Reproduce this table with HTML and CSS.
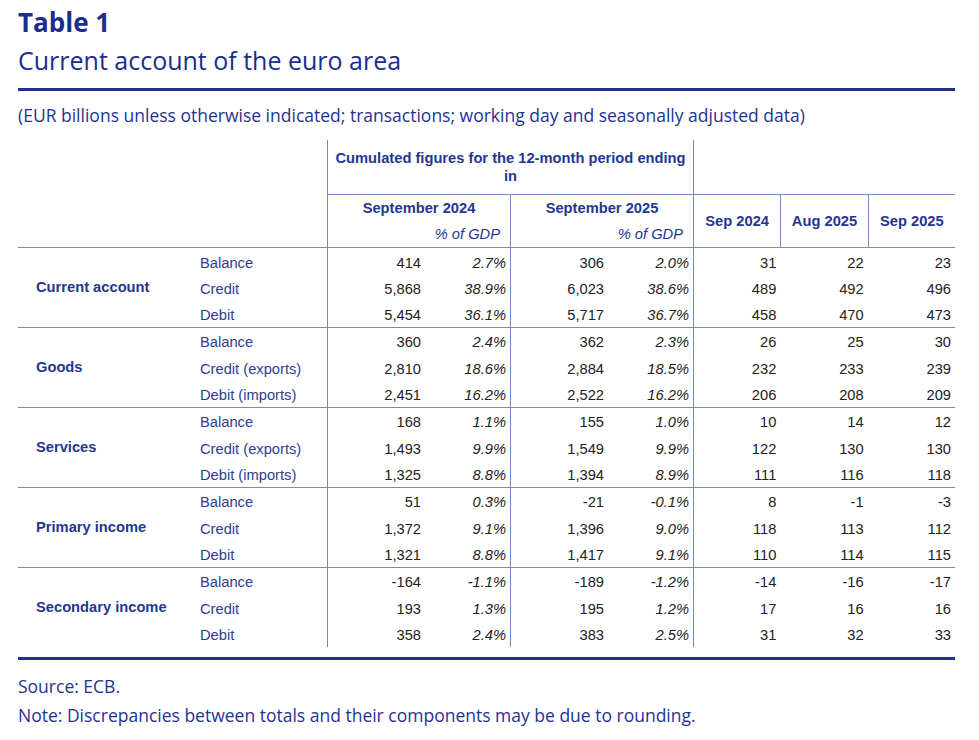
FILE: index.html
```html
<!DOCTYPE html>
<html lang="en">
<head>
<meta charset="utf-8">
<title>Table 1 – Current account of the euro area</title>
<link rel="stylesheet" href="styles.css">
</head>
<body>
<div class="page">
  <header class="heading">
    <h1 class="title">Table 1</h1>
    <h2 class="subtitle">Current account of the euro area</h2>
  </header>
  <p class="unit">(EUR billions unless otherwise indicated; transactions; working day and seasonally adjusted data)</p>

  <table class="data">
    <colgroup>
      <col class="c-group"><col class="c-item">
      <col class="c-val"><col class="c-pct">
      <col class="c-val"><col class="c-pct">
      <col class="c-m"><col class="c-m"><col class="c-m">
    </colgroup>
    <thead>
      <tr class="h1">
        <th colspan="2" class="blank"></th>
        <th colspan="4" class="cum bl bb">Cumulated figures for the 12-month period ending<br>in</th>
        <th colspan="3" class="bl bb"></th>
      </tr>
      <tr class="h2">
        <th colspan="2" rowspan="2" class="blank"></th>
        <th colspan="2" class="bl">September 2024</th>
        <th colspan="2" class="bl">September 2025</th>
        <th rowspan="2" class="bl">Sep 2024</th>
        <th rowspan="2" class="bl">Aug 2025</th>
        <th rowspan="2" class="bl">Sep 2025</th>
      </tr>
      <tr class="h3">
        <th class="bl"></th>
        <th class="gdp">% of GDP</th>
        <th class="bl"></th>
        <th class="gdp">% of GDP</th>
      </tr>
    </thead>

    <tbody>
      <tr class="first"><th rowspan="3" class="grp">Current account</th><td class="item">Balance</td><td class="bl">414</td><td class="pct">2.7%</td><td class="bl">306</td><td class="pct">2.0%</td><td class="bl">31</td><td>22</td><td>23</td></tr>
      <tr><td class="item">Credit</td><td class="bl">5,868</td><td class="pct">38.9%</td><td class="bl">6,023</td><td class="pct">38.6%</td><td class="bl">489</td><td>492</td><td>496</td></tr>
      <tr><td class="item">Debit</td><td class="bl">5,454</td><td class="pct">36.1%</td><td class="bl">5,717</td><td class="pct">36.7%</td><td class="bl">458</td><td>470</td><td>473</td></tr>
    </tbody>
    <tbody>
      <tr class="first"><th rowspan="3" class="grp">Goods</th><td class="item">Balance</td><td class="bl">360</td><td class="pct">2.4%</td><td class="bl">362</td><td class="pct">2.3%</td><td class="bl">26</td><td>25</td><td>30</td></tr>
      <tr><td class="item">Credit (exports)</td><td class="bl">2,810</td><td class="pct">18.6%</td><td class="bl">2,884</td><td class="pct">18.5%</td><td class="bl">232</td><td>233</td><td>239</td></tr>
      <tr><td class="item">Debit (imports)</td><td class="bl">2,451</td><td class="pct">16.2%</td><td class="bl">2,522</td><td class="pct">16.2%</td><td class="bl">206</td><td>208</td><td>209</td></tr>
    </tbody>
    <tbody>
      <tr class="first"><th rowspan="3" class="grp">Services</th><td class="item">Balance</td><td class="bl">168</td><td class="pct">1.1%</td><td class="bl">155</td><td class="pct">1.0%</td><td class="bl">10</td><td>14</td><td>12</td></tr>
      <tr><td class="item">Credit (exports)</td><td class="bl">1,493</td><td class="pct">9.9%</td><td class="bl">1,549</td><td class="pct">9.9%</td><td class="bl">122</td><td>130</td><td>130</td></tr>
      <tr><td class="item">Debit (imports)</td><td class="bl">1,325</td><td class="pct">8.8%</td><td class="bl">1,394</td><td class="pct">8.9%</td><td class="bl">111</td><td>116</td><td>118</td></tr>
    </tbody>
    <tbody>
      <tr class="first"><th rowspan="3" class="grp">Primary income</th><td class="item">Balance</td><td class="bl">51</td><td class="pct">0.3%</td><td class="bl">-21</td><td class="pct">-0.1%</td><td class="bl">8</td><td>-1</td><td>-3</td></tr>
      <tr><td class="item">Credit</td><td class="bl">1,372</td><td class="pct">9.1%</td><td class="bl">1,396</td><td class="pct">9.0%</td><td class="bl">118</td><td>113</td><td>112</td></tr>
      <tr><td class="item">Debit</td><td class="bl">1,321</td><td class="pct">8.8%</td><td class="bl">1,417</td><td class="pct">9.1%</td><td class="bl">110</td><td>114</td><td>115</td></tr>
    </tbody>
    <tbody>
      <tr class="first"><th rowspan="3" class="grp">Secondary income</th><td class="item">Balance</td><td class="bl">-164</td><td class="pct">-1.1%</td><td class="bl">-189</td><td class="pct">-1.2%</td><td class="bl">-14</td><td>-16</td><td>-17</td></tr>
      <tr><td class="item">Credit</td><td class="bl">193</td><td class="pct">1.3%</td><td class="bl">195</td><td class="pct">1.2%</td><td class="bl">17</td><td>16</td><td>16</td></tr>
      <tr><td class="item">Debit</td><td class="bl">358</td><td class="pct">2.4%</td><td class="bl">383</td><td class="pct">2.5%</td><td class="bl">31</td><td>32</td><td>33</td></tr>
    </tbody>
  </table>

  <footer class="notes">
    <p>Source: ECB.</p>
    <p>Note: Discrepancies between totals and their components may be due to rounding.</p>
  </footer>
</div>
</body>
</html>
```

FILE: styles.css
```css
* { box-sizing: border-box; }

html, body {
  margin: 0;
  padding: 0;
  background: #ffffff;
}

.page {
  width: 937px;
  margin-left: 18px;
  padding-top: 3px;
  font-family: "Open Sans", "Liberation Sans", sans-serif;
  color: #1f3391;
}

.heading {
  border-bottom: 3px solid #1e2f8e;
  padding-bottom: 9px;
}

.title,
.subtitle {
  margin: 0;
  color: #1b2d8c;
}

.title {
  font-size: 26px;
  line-height: 39px;
  font-weight: 700;
}

.subtitle {
  font-size: 25px;
  line-height: 37px;
  font-weight: 400;
}

.unit {
  margin: 13px 0 0;
  font-size: 17.5px;
  line-height: 22px;
}

/* ---------- table ---------- */
.data {
  margin-top: 14px;
  width: 937px;
  table-layout: fixed;
  border-collapse: separate;
  border-spacing: 0;
  font-family: "Liberation Sans", Arial, sans-serif;
  font-size: 14.7px;
  line-height: 17px;
  color: #222222;
}

.c-group { width: 172px; }
.c-item { width: 137px; }
.data col.c-val { width: 98px; }
.data col.c-pct { width: 85px; }
.c-m { width: 87.33px; }

.bl { border-left: 1px solid #7489c8; }
.bb { border-bottom: 1px solid #7489c8; }

/* header */
.data thead th {
  color: #24368f;
  font-weight: 700;
  text-align: center;
  vertical-align: middle;
  padding: 0 4px;
}

.h1 { height: 55px; }
.h2 { height: 26px; }
.h3 { height: 26px; }

.data thead th.cum {
  line-height: 18.4px;
}

.data thead th.gdp {
  font-weight: 400;
  font-style: italic;
  text-align: right;
  padding-right: 10px;
}

/* body */
.data tbody tr { height: 26.333px; }
.data tbody tr.first { height: 27.333px; }

.data tbody tr.first th,
.data tbody tr.first td { border-top: 1px solid #7489c8; }

.data tbody td {
  text-align: right;
  vertical-align: top;
  padding: 6.5px 4px 0 0;
}

.data tbody th.grp {
  text-align: left;
  vertical-align: middle;
  padding: 0 0 0 18px;
  font-weight: 700;
  color: #24368f;
}

.data tbody td.item {
  text-align: left;
  padding-left: 10px;
  color: #2a3e96;
}

.data tbody td.pct { font-style: italic; }

/* ---------- notes ---------- */
.notes {
  margin-top: 10px;
  border-top: 3px solid #1e2f8e;
  padding-top: 12px;
}

.notes p {
  margin: 0;
  font-size: 17.5px;
  line-height: 29px;
}
```
